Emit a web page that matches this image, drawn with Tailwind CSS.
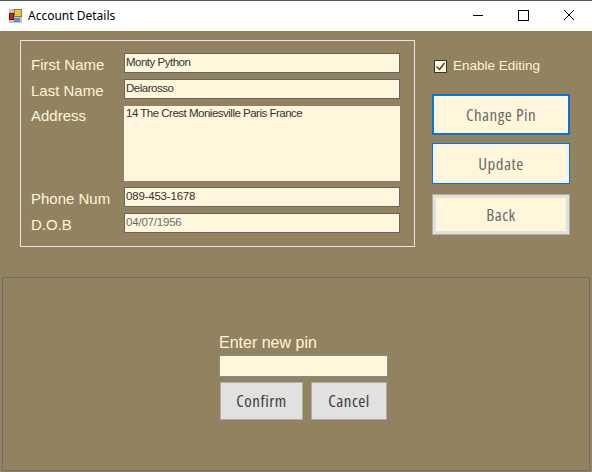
<!DOCTYPE html>
<html lang="en">

<head>
    <meta charset="UTF-8">
    <title>Account Details</title>
    <script src="https://cdn.jsdelivr.net/npm/@tailwindcss/browser@4"></script>
</head>

<body class="w-[592px] h-[472px] overflow-hidden bg-[#93825f] font-['Liberation_Sans',sans-serif]">
    <!-- title bar -->
    <div class="h-[31px] bg-white border-t border-[#555] flex items-center">
        <svg class="ml-[9px] w-[13px] h-[14px]" viewBox="0 0 13 14">
            <rect x="0" y="0" width="13" height="14" fill="#c4c4c4" />
            <rect x="5.5" y="0.5" width="7" height="7" fill="#f0c040" stroke="#a07820" />
            <rect x="0.5" y="4.5" width="4" height="6" fill="#d02020" stroke="#701010" />
            <rect x="5" y="9" width="6" height="4" fill="#5a90e0" />
        </svg>
        <span class="ml-[6px] text-[12px] text-black font-['Noto_Sans',sans-serif]">Account Details</span>
        <div class="ml-auto flex items-center h-full">
            <svg class="w-[46px] h-[30px]" viewBox="0 0 46 30"><path d="M18 14.5h10" stroke="#000" fill="none" /></svg>
            <svg class="w-[45px] h-[30px]" viewBox="0 0 45 30"><rect x="17.5" y="9.5" width="10" height="10" stroke="#000" fill="none" /></svg>
            <svg class="w-[46px] h-[30px]" viewBox="0 0 46 30"><path d="M18 9l10 10M28 9l-10 10" stroke="#000" fill="none" /></svg>
        </div>
    </div>

    <div class="flex items-start pl-[20px] pt-[9px] h-[246px]">
        <!-- details group -->
        <div class="w-[395px] h-[207px] border border-[#e6e6e6] pl-[10px] pt-[12px]">
            <div class="flex items-start h-[20px]">
                <label class="w-[93px] pt-[2px] text-[15px] leading-[20px] text-[#fdf5dc]">First Name</label>
                <div class="w-[276px] h-[20px] bg-[#fff6dc] border border-[#666] pl-[1px] text-[11.5px] tracking-[-0.5px] leading-[16px] text-[#333]">Monty Python</div>
            </div>
            <div class="flex items-start h-[20px] mt-[6px]">
                <label class="w-[93px] pt-[2px] text-[15px] leading-[20px] text-[#fdf5dc]">Last Name</label>
                <div class="w-[276px] h-[20px] bg-[#fff6dc] border border-[#666] pl-[1px] text-[11.5px] tracking-[-0.5px] leading-[16px] text-[#333]">Delarosso</div>
            </div>
            <div class="flex items-start h-[75px] mt-[7px]">
                <label class="w-[93px] text-[15px] leading-[20px] text-[#fdf5dc]">Address</label>
                <div class="w-[276px] h-[75px] bg-[#fff6dc] pl-[2px] text-[11.5px] tracking-[-0.5px] leading-[14px] text-[#333]">14 The Crest Moniesville Paris France</div>
            </div>
            <div class="flex items-start h-[20px] mt-[6px]">
                <label class="w-[93px] pt-[2px] text-[15px] leading-[20px] text-[#fdf5dc]">Phone Num</label>
                <div class="w-[276px] h-[20px] bg-[#fff6dc] border border-[#666] pl-[1px] text-[11.5px] tracking-[-0.2px] leading-[16px] text-[#333]">089-453-1678</div>
            </div>
            <div class="flex items-start h-[20px] mt-[6px]">
                <label class="w-[93px] pt-[2px] text-[15px] leading-[20px] text-[#fdf5dc]">D.O.B</label>
                <div class="w-[276px] h-[20px] bg-[#fff6dc] border border-[#666] pl-[1px] text-[11.5px] tracking-[-0.2px] leading-[16px] text-[#6d6d6d]">04/07/1956</div>
            </div>
        </div>

        <!-- side actions -->
        <div class="ml-[17px] w-[138px] flex flex-col">
            <div class="flex items-center h-[16px] mt-[18px] ml-[2px]">
                <span class="w-[13px] h-[13px] border border-[#333] bg-[#fff6dc] flex items-center justify-center">
                    <svg class="w-[11px] h-[11px]" viewBox="0 0 11 11"><path d="M1.5 5.5l3 3 5-6.5" stroke="#333" stroke-width="1.3" fill="none" /></svg>
                </span>
                <span class="ml-[6px] text-[13.5px] text-[#fdf5dc]">Enable Editing</span>
            </div>
            <button class="mt-[20px] h-[41px] pt-[1px] bg-[#fff6dc] border-2 border-[#0a74d6] shadow-[inset_0_0_0_1px_#f7f7f2] text-[17px] tracking-[0.5px] text-[#6a6a6a] [font-family:'Open_Sans'] [font-stretch:condensed]">Change Pin</button>
            <button class="mt-[8px] h-[41px] pt-[1px] bg-[#fff6dc] border border-[#0a74d6] shadow-[inset_0_0_0_3px_#f2f2ee] text-[17px] tracking-[0.5px] text-[#6a6a6a] [font-family:'Open_Sans'] [font-stretch:condensed]">Update</button>
            <button class="mt-[10px] h-[41px] pt-[1px] bg-[#fff6dc] border border-[#adadad] shadow-[inset_0_0_0_3px_#e2e0da] text-[17px] tracking-[0.5px] text-[#6a6a6a] [font-family:'Open_Sans'] [font-stretch:condensed]">Back</button>
        </div>
    </div>

    <!-- change pin panel -->
    <div class="ml-[2px] w-[588px] h-[194px] border border-[#6e6e6e] flex flex-col items-start pl-[216px] pt-[56px]">
        <span class="text-[16px] leading-[18px] text-[#fdf5dc]">Enter new pin</span>
        <div class="w-[169px] h-[22px] mt-[3px] bg-[#fff6dc] border border-[#8a8a90]"></div>
        <div class="flex mt-[5px] ml-[1px] gap-[8px]">
            <button class="w-[83px] h-[38px] bg-[#e1e1e1] border border-[#adadad] text-[17px] tracking-[0.5px] text-[#3c3c46] [font-family:'Open_Sans'] [font-stretch:condensed]">Confirm</button>
            <button class="w-[76px] h-[38px] bg-[#e1e1e1] border border-[#adadad] text-[17px] tracking-[0.5px] text-[#3c3c46] [font-family:'Open_Sans'] [font-stretch:condensed]">Cancel</button>
        </div>
    </div>
</body>

</html>
